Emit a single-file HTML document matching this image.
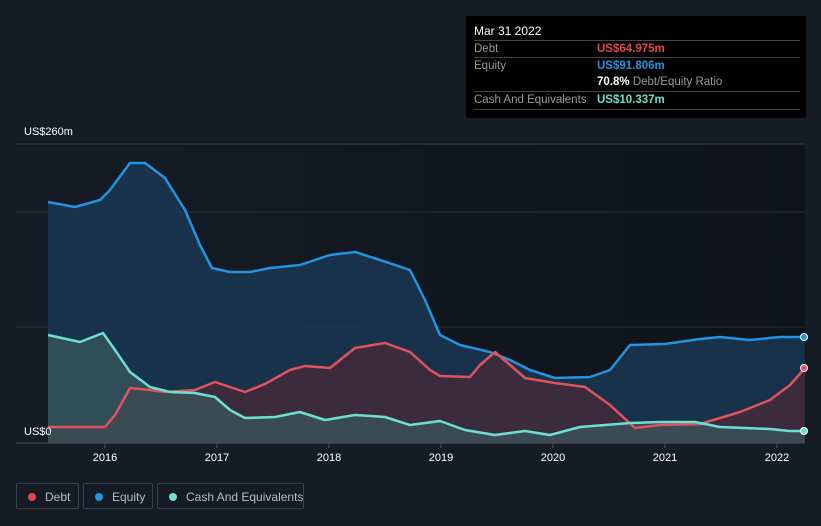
<!DOCTYPE html>
<html><head><style>
body{margin:0;width:821px;height:526px;background:#161c26;font-family:"Liberation Sans",sans-serif;overflow:hidden;position:relative}
.tt{position:absolute;left:466px;top:16px;width:340px;height:102px;background:#000;color:#fff;font-size:11.5px}
.row{position:absolute;left:8px;width:326px;border-top:1px solid #444;height:17px;line-height:17px;color:#999;white-space:nowrap}
.row span{position:absolute;left:123px;font-weight:bold}
.lg{position:absolute;top:483px;height:26px;border:1px solid #3a414c;border-radius:2px;color:#bbb;font-size:12px;line-height:26px;box-sizing:border-box;white-space:nowrap}
.lg i{position:absolute;left:11px;top:9px;width:8px;height:8px;border-radius:50%}
.lg b{font-weight:normal;position:absolute;left:28px}
</style></head><body>
<svg width="821" height="526" style="position:absolute;left:0;top:0">
<defs><linearGradient id="bg" x1="0" x2="1"><stop offset="0" stop-color="#161c26"/><stop offset="1" stop-color="#0f1319"/></linearGradient></defs>
<rect x="16" y="144" width="789" height="299" fill="url(#bg)"/>
<line x1="16" y1="144" x2="805" y2="144" stroke="#3a3f47"/>
<line x1="16" y1="212" x2="805" y2="212" stroke="#2a2f37"/>
<line x1="16" y1="327" x2="805" y2="327" stroke="#2a2f37"/>
<path d="M48,202 L75,207 L100,200 L110,190 L130,163 L145,163 L165,178 L185,210 L200,245 L212,268 L230,272 L250,272 L270,268 L300,265 L330,255 L355,252 L380,260 L410,270 L425,300 L440,335 L460,345 L490,352 L510,360 L530,370 L555,378 L590,377 L610,370 L630,345 L665,344 L700,339 L720,337 L750,340 L780,337 L805,337 L805,443 L48,443Z" fill="#1a3a56" fill-opacity="0.8"/>
<path d="M48,427 L105,427 L115,415 L130,388 L150,390 L165,392 L195,390 L215,382 L230,387 L245,392 L265,384 L290,370 L305,366 L330,368 L355,348 L385,343 L410,352 L430,370 L440,376 L470,377 L480,365 L495,352 L510,365 L525,378 L555,383 L585,387 L610,405 L635,428 L660,425 L700,424 L740,412 L770,400 L790,385 L805,368 L805,443 L48,443Z" fill="#432a3a" fill-opacity="0.85"/>
<path d="M48,335 L80,342 L103,333 L115,350 L130,372 L150,387 L170,392 L195,393 L215,397 L230,410 L245,418 L275,417 L300,412 L325,420 L355,415 L385,417 L410,425 L440,421 L465,430 L495,435 L525,431 L550,435 L580,427 L630,423 L660,422 L695,422 L720,427 L770,429 L790,431 L805,431 L805,443 L48,443Z" fill="#3a5a5e" fill-opacity="0.7"/>
<g fill="none" stroke-width="2.5" stroke-linejoin="round">
<path d="M48,202 L75,207 L100,200 L110,190 L130,163 L145,163 L165,178 L185,210 L200,245 L212,268 L230,272 L250,272 L270,268 L300,265 L330,255 L355,252 L380,260 L410,270 L425,300 L440,335 L460,345 L490,352 L510,360 L530,370 L555,378 L590,377 L610,370 L630,345 L665,344 L700,339 L720,337 L750,340 L780,337 L805,337" stroke="#2394df"/>
<path d="M48,427 L105,427 L115,415 L130,388 L150,390 L165,392 L195,390 L215,382 L230,387 L245,392 L265,384 L290,370 L305,366 L330,368 L355,348 L385,343 L410,352 L430,370 L440,376 L470,377 L480,365 L495,352 L510,365 L525,378 L555,383 L585,387 L610,405 L635,428 L660,425 L700,424 L740,412 L770,400 L790,385 L805,368" stroke="#e0525e"/>
<path d="M48,335 L80,342 L103,333 L115,350 L130,372 L150,387 L170,392 L195,393 L215,397 L230,410 L245,418 L275,417 L300,412 L325,420 L355,415 L385,417 L410,425 L440,421 L465,430 L495,435 L525,431 L550,435 L580,427 L630,423 L660,422 L695,422 L720,427 L770,429 L790,431 L805,431" stroke="#6ce0d0"/>
</g>
<circle cx="804" cy="337" r="3.5" fill="#2394df" stroke="#fff"/>
<circle cx="804" cy="368" r="3.5" fill="#e0525e" stroke="#fff"/>
<circle cx="804" cy="431" r="3.5" fill="#6ce0d0" stroke="#fff"/>
<line x1="16" y1="443" x2="805" y2="443" stroke="#4a5058"/>
<g stroke="#4a5058"><line x1="105" y1="443" x2="105" y2="448"/><line x1="217" y1="443" x2="217" y2="448"/><line x1="329" y1="443" x2="329" y2="448"/><line x1="441" y1="443" x2="441" y2="448"/><line x1="553" y1="443" x2="553" y2="448"/><line x1="665" y1="443" x2="665" y2="448"/><line x1="777" y1="443" x2="777" y2="448"/></g>
<g fill="#fff" font-size="11" text-anchor="middle" font-family="Liberation Sans,sans-serif">
<text x="105" y="461">2016</text><text x="217" y="461">2017</text><text x="329" y="461">2018</text><text x="441" y="461">2019</text><text x="553" y="461">2020</text><text x="665" y="461">2021</text><text x="777" y="461">2022</text>
<text x="24" y="135" text-anchor="start">US$260m</text><text x="24" y="435" text-anchor="start">US$0</text>
</g>
</svg>
<div class="tt">
<div style="position:absolute;left:8px;top:8px;font-size:12px">Mar 31 2022</div>
<div class="row" style="top:24px">Debt<span style="color:#e8434c">US$64.975m</span></div>
<div class="row" style="top:41px">Equity<span style="color:#2394df">US$91.806m</span></div>
<div class="row" style="top:58px;border-top:none"><span style="color:#fff">70.8% <em style="font-style:normal;font-weight:normal;color:#999">Debt/Equity Ratio</em></span></div>
<div class="row" style="top:75px">Cash And Equivalents<span style="color:#6ce0d0">US$10.337m</span></div>
<div class="row" style="top:93px;height:0"></div>
</div>
<div class="lg" style="left:16px;width:63px"><i style="background:#e8434c"></i><b>Debt</b></div>
<div class="lg" style="left:83px;width:70px"><i style="background:#2394df"></i><b>Equity</b></div>
<div class="lg" style="left:157px;width:147px"><i style="background:#6ce0d0"></i><b>Cash And Equivalents</b></div>
</body></html>
